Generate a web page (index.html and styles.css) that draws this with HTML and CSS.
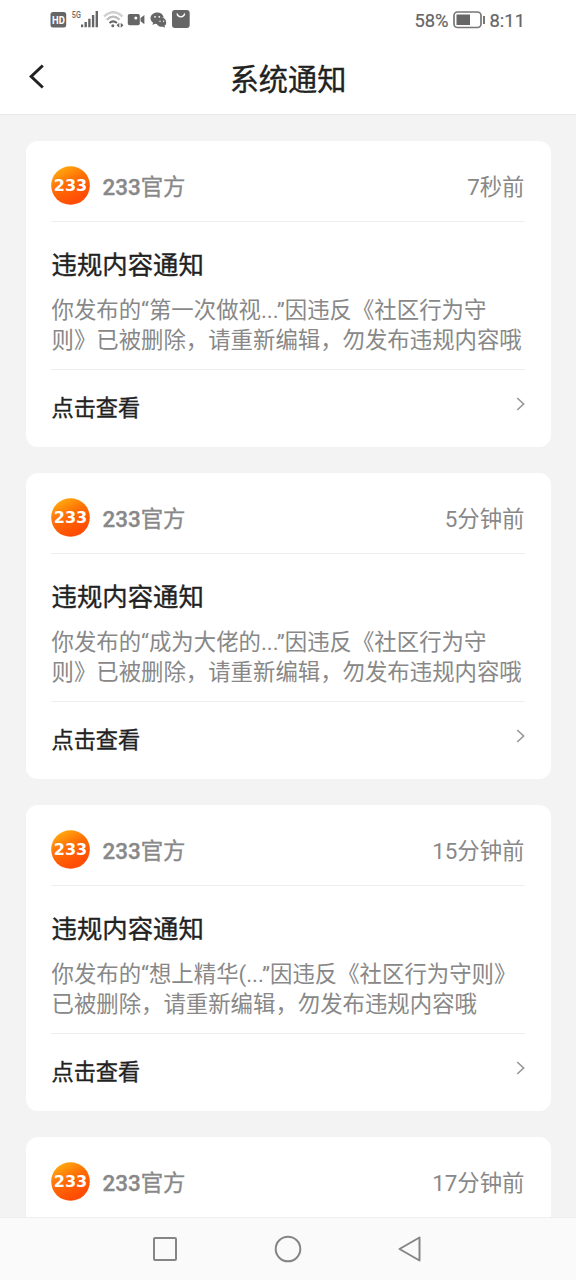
FILE: index.html
```html
<!DOCTYPE html>
<html lang="zh-CN">
<head>
<meta charset="utf-8">
<title>系统通知</title>
<link rel="stylesheet" href="styles.css">
</head>
<body>
<svg class="defs" width="0" height="0" aria-hidden="true">
  <defs>
    <linearGradient id="orange" x1="0.15" y1="0.05" x2="0.6" y2="0.9">
      <stop offset="0" stop-color="#ffae10"/><stop offset="0.5" stop-color="#ff6d05"/><stop offset="1" stop-color="#ff4d05"/>
    </linearGradient>
    <symbol id="logo" viewBox="0 0 39 39">
      <circle cx="19.5" cy="19.5" r="19.3" fill="url(#orange)"/>
      <text x="2.8" y="25.2" textLength="33.4" lengthAdjust="spacingAndGlyphs" class="logo-text">233</text>
    </symbol>
    <symbol id="chevron" viewBox="0 0 9 14">
      <path d="M1.2 1 7.6 7 1.2 13" fill="none" stroke="#999" stroke-width="1.7"/>
    </symbol>
  </defs>
</svg>
<div class="screen">
  <header class="statusbar">
    <svg class="status-icons" width="150" height="40" viewBox="40 0 150 40" fill="#666">
      <rect x="50.5" y="12" width="15.7" height="15.5" rx="2.5"/>
      <text x="52" y="23.7" textLength="12.8" lengthAdjust="spacingAndGlyphs" class="hd">HD</text>
      <text x="71.8" y="18" textLength="9" lengthAdjust="spacingAndGlyphs" class="net">5G</text>
      <path d="M81 24.5h2.2v2.8H81zM84.500 22h2.400v5.300h-2.400zM88.200 18.700h2.400v8.600h-2.400zM91.900 15h2.400v12.300h-2.400zM95.600 11H98v16.300h-2.400z"/>
      <g fill="none" stroke-width="2.2">
        <path d="M104 16.500Q113.200 8 122.500 16.500" stroke="#d0d0d0"/>
        <path d="M106.800 19.700Q113.200 13.700 119.600 19.700" stroke="#bbb"/>
        <path d="M109.500 23Q113.200 19.600 116.900 23" stroke="#666"/>
      </g>
      <circle cx="112.800" cy="25.800" r="1.500"/>
      <path d="M119.300 22.700v5l-2.800-2.500zM120.700 22.700v5l2.800-2.500z"/>
      <rect x="127.800" y="14" width="12" height="11.200" rx="1.700"/>
      <path d="m140.500 18 3.900-3v9.300l-3.900-3z"/>
      <circle cx="135.800" cy="18" r="1.500" fill="#fff"/>
      <path d="M157.400 12.500c-3.900 0-6.900 2.500-6.900 5.800 0 1.900 1 3.400 2.600 4.500l-.6 2.200 2.500-1.200 2.300.4c-.7-4 2.400-6.700 6.500-6.800-.7-2.900-3.200-4.900-6.400-4.900z"/>
      <path d="M161.800 17.800c-3.200 0-5.300 2-5.300 4.500 0 2.800 2.800 4.900 6.400 4.400l2.100 1-.5-1.900c1.100-.9 1.700-2 1.700-3.400 0-2.600-1.900-4.600-4.400-4.600z"/>
      <g fill="#fff"><circle cx="155" cy="16.800" r=".9"/><circle cx="159.300" cy="16.800" r=".9"/><circle cx="160" cy="21.300" r=".7"/><circle cx="163.700" cy="21.300" r=".7"/></g>
      <rect x="172" y="10" width="17.700" height="18" rx="3"/>
      <path d="M177 13.500c1 4.400 6.700 4.400 7.700 0" fill="none" stroke="#fff" stroke-width="1.300"/>
    </svg>
    <div class="status-right">
      <span class="percent">58%</span>
      <svg width="33" height="18" viewBox="0 0 33 18">
        <rect x="1" y="1" width="27" height="15.500" rx="3.500" fill="none" stroke="#777" stroke-width="1.700"/>
        <rect x="3.500" y="3.500" width="13.500" height="10.500" fill="#666"/>
        <path d="M31 5v8" stroke="#777" stroke-width="2"/>
      </svg>
      <span class="clock">8:11</span>
    </div>
  </header>
  <nav class="titlebar">
    <svg class="back" width="18" height="28" viewBox="0 0 18 28"><path d="M14.800 2.500 3.200 13.500 14.800 24.500" fill="none" stroke="#222" stroke-width="3"/></svg>
    <h1>系统通知</h1>
  </nav>
  <main class="list">
    <article class="card">
      <div class="card-head"><svg class="logo"><use href="#logo"/></svg><span class="name"><b>233</b>官方</span><time>7秒前</time></div>
      <div class="card-body"><h2>违规内容通知</h2><p>你发布的“第一次做视...”因违反《社区行为守<br>则》已被删除，请重新编辑，勿发布违规内容哦</p></div>
      <div class="card-foot"><span>点击查看</span><svg class="chevron"><use href="#chevron"/></svg></div>
    </article>
    <article class="card">
      <div class="card-head"><svg class="logo"><use href="#logo"/></svg><span class="name"><b>233</b>官方</span><time>5分钟前</time></div>
      <div class="card-body"><h2>违规内容通知</h2><p>你发布的“成为大佬的...”因违反《社区行为守<br>则》已被删除，请重新编辑，勿发布违规内容哦</p></div>
      <div class="card-foot"><span>点击查看</span><svg class="chevron"><use href="#chevron"/></svg></div>
    </article>
    <article class="card">
      <div class="card-head"><svg class="logo"><use href="#logo"/></svg><span class="name"><b>233</b>官方</span><time>15分钟前</time></div>
      <div class="card-body"><h2>违规内容通知</h2><p>你发布的“想上精华(...”因违反《社区行为守则》<br>已被删除，请重新编辑，勿发布违规内容哦</p></div>
      <div class="card-foot"><span>点击查看</span><svg class="chevron"><use href="#chevron"/></svg></div>
    </article>
    <article class="card">
      <div class="card-head"><svg class="logo"><use href="#logo"/></svg><span class="name"><b>233</b>官方</span><time>17分钟前</time></div>
    </article>
  </main>
  <footer class="navbar">
    <svg width="26" height="28" viewBox="0 0 26 28"><rect x="2" y="3" width="22" height="22" rx="1"/></svg>
    <svg width="28" height="28" viewBox="0 0 28 28"><circle cx="14" cy="14" r="12.300"/></svg>
    <svg width="26" height="28" viewBox="0 0 26 28"><path d="M22.500 2.500v23L2.500 14z"/></svg>
  </footer>
</div>
</body>
</html>
```
FILE: styles.css
```css
* { box-sizing: border-box; }
body {
  margin: 0;
  background: #f3f3f3;
  font-family: Roboto, "Noto Sans CJK SC", sans-serif;
  color: #222;
}
h1, h2, p { margin: 0; }
svg { display: block; flex: none; }
.defs { position: absolute; }
.logo-text { font: bold 16px "DejaVu Sans", sans-serif; fill: #fff; }
.screen {
  width: 576px;
  height: 1280px;
  display: flex;
  flex-direction: column;
  overflow: hidden;
}
.statusbar {
  flex: none;
  height: 40px;
  padding: 0 51px 0 40px;
  display: flex;
  justify-content: space-between;
  background: #fff;
}
.hd { font: bold 11px Roboto, sans-serif; fill: #fff; }
.net { font: 500 9.5px Roboto, sans-serif; }
.status-right {
  display: flex;
  align-items: center;
  color: #666;
  font-size: 18.4px;
  -webkit-text-stroke: 0.2px;
}
.percent { margin-right: 4px; }
.clock { margin-left: 4px; }
.titlebar {
  flex: none;
  height: 75px;
  display: grid;
  grid-template-columns: 60px 1fr 60px;
  background: #fff;
  border-bottom: 1px solid #e8e8e8;
}
.back { margin: 23px 0 0 28px; }
h1 {
  font-size: 29.2px;
  font-weight: 400;
  line-height: 40px;
  padding-top: 20px;
  text-align: center;
  -webkit-text-stroke: 0.35px;
}
.list {
  flex: 1;
  min-height: 0;
  overflow: hidden;
  padding: 26px 25.5px 0;
  display: flex;
  flex-direction: column;
  gap: 26px;
}
.card {
  flex: none;
  height: 306px;
  padding: 0 26px 0 25.5px;
  border-radius: 12px;
  background: #fff;
}
.card-head {
  height: 81px;
  padding-top: 9px;
  display: flex;
  align-items: center;
  border-bottom: 1px solid #eee;
  color: #888;
  font-size: 22.4px;
}
.logo { width: 39px; height: 39px; }
.name {
  flex: 1;
  margin-left: 12.5px;
  padding-bottom: 2px;
  -webkit-text-stroke: 0.35px;
}
.name b { font-weight: 500; }
time { padding-bottom: 2px; }
.card-body {
  height: 148px;
  padding-top: 24px;
  border-bottom: 1px solid #eee;
}
h2, .card-body p, .card-foot span { padding-left: 0.5px; }
h2 {
  font-size: 25.4px;
  font-weight: 400;
  line-height: 38px;
  -webkit-text-stroke: 0.35px;
}
.card-body p {
  margin-top: 11px;
  font-size: 22.4px;
  line-height: 30px;
  color: #888;
  white-space: nowrap;
}
.card-foot {
  display: flex;
  justify-content: space-between;
  padding-top: 21px;
  font-size: 22.2px;
  line-height: 34px;
}
.card-foot span { -webkit-text-stroke: 0.35px; }
.chevron { width: 9px; height: 14px; margin-top: 6px; }
.navbar {
  flex: none;
  height: 63px;
  padding: 0 153px 0 152px;
  display: flex;
  align-items: center;
  justify-content: space-between;
  background: #fafafa;
  border-top: 1px solid #eee;
  fill: none;
  stroke: #858585;
  stroke-width: 2;
  stroke-linejoin: round;
}
```
